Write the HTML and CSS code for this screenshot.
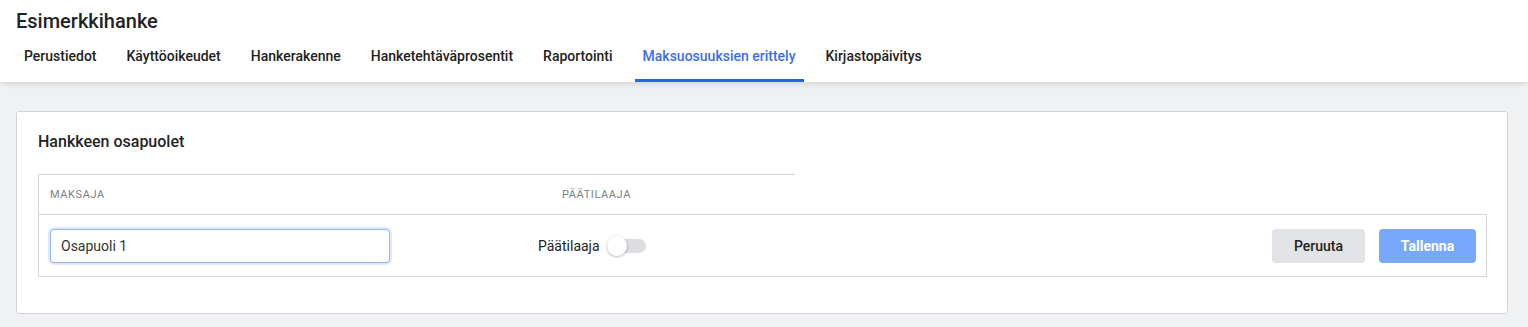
FILE: index.html
```html
<!DOCTYPE html>
<html lang="fi">
<head>
  <meta charset="UTF-8">
  <meta name="viewport" content="width=device-width, initial-scale=1.0">
  <title>Esimerkkihanke</title>
  <link rel="stylesheet" href="styles.css">
</head>
<body>

<!-- Project header with tabs -->
<header class="project-header">
  <h1 class="project-title">Esimerkkihanke</h1>
  <nav class="tabs">
    <a class="tab">Perustiedot</a>
    <a class="tab">Käyttöoikeudet</a>
    <a class="tab">Hankerakenne</a>
    <a class="tab">Hanketehtäväprosentit</a>
    <a class="tab">Raportointi</a>
    <a class="tab active">Maksuosuuksien erittely</a>
    <a class="tab">Kirjastopäivitys</a>
  </nav>
</header>

<main class="content">
  <section class="card">
    <h2 class="card-title">Hankkeen osapuolet</h2>

    <div class="parties">
      <div class="parties-head">
        <div class="col col-payer">Maksaja</div>
        <div class="col col-client">Päätilaaja</div>
      </div>

      <div class="parties-row">
        <input class="text-input" type="text" value="Osapuoli 1">
        <label class="switch-label">
          Päätilaaja
          <span class="switch"><span class="switch-knob"></span></span>
        </label>
        <div class="row-actions">
          <button class="btn btn-cancel">Peruuta</button>
          <button class="btn btn-save">Tallenna</button>
        </div>
      </div>
    </div>
  </section>
</main>

</body>
</html>
```

FILE: styles.css
```css
body {
  font-family: Roboto, "Liberation Sans", Arial, sans-serif;
  background-color: #f0f1f3;
  color: #222;
  margin: 0;
  padding: 0;
}

/* Header */
.project-header {
  background-color: #fff;
  padding: 7px 16px 0;
  box-shadow: 0 2px 6px rgba(0, 0, 0, 0.12);
  position: relative;
}

.project-title {
  margin: 0;
  font-size: 20px;
  line-height: 28px;
  font-weight: 500;
  color: #1f2328;
}

.tabs {
  display: flex;
  gap: 14px;
  margin-top: 11px;
}

.tab {
  font-size: 14px;
  line-height: 20px;
  font-weight: 500;
  color: #222;
  padding: 0 8px 13px;
  border-bottom: 3px solid transparent;
  cursor: pointer;
}

.tab.active {
  color: #3a6fe6;
  border-bottom-color: #2a64ea;
}

/* Page content */
.content {
  padding: 29px 20px 14px 16px;
}

.card {
  background-color: #fff;
  border: 1px solid #d3d4d9;
  border-radius: 3px;
  padding: 18px 20px 36px 21px;
}

.card-title {
  margin: 0 0 20px;
  font-size: 16px;
  line-height: 24px;
  font-weight: 500;
  color: #1f2328;
}

/* Parties table */
.parties-head {
  display: flex;
  align-items: center;
  width: 756px;
  height: 39px;
  border-top: 1px solid #d6d7dc;
  border-left: 1px solid #d6d7dc;
}

.col {
  font-size: 11px;
  letter-spacing: 0.6px;
  text-transform: uppercase;
  color: #7b8089;
}

.col-payer {
  width: 512px;
  padding-left: 11px;
}

.parties-row {
  display: flex;
  align-items: center;
  border: 1px solid #d6d7dc;
  padding: 14px 10px 13px 11px;
}

.text-input {
  width: 340px;
  height: 34px;
  box-sizing: border-box;
  padding: 0 10px;
  font-family: inherit;
  font-size: 14px;
  color: #333;
  border: 1px solid #8db7f3;
  border-radius: 4px;
  box-shadow: 0 0 0 2px rgba(122, 170, 245, 0.25);
  outline: none;
}

.switch-label {
  display: flex;
  align-items: center;
  margin-left: 148px;
  font-size: 14px;
  color: #222;
}

.switch {
  position: relative;
  width: 39px;
  height: 14px;
  margin-left: 7px;
  border-radius: 7px;
  background-color: #dcdde1;
}

.switch-knob {
  position: absolute;
  left: 0;
  top: -3px;
  width: 20px;
  height: 20px;
  border-radius: 50%;
  background-color: #fff;
  box-shadow: 0 1px 3px rgba(0, 0, 0, 0.3);
}

.row-actions {
  margin-left: auto;
  display: flex;
  gap: 14px;
}

.btn {
  height: 34px;
  border: none;
  border-radius: 4px;
  font-family: inherit;
  font-size: 14px;
  font-weight: 500;
  cursor: pointer;
}

.btn-cancel {
  width: 93px;
  background-color: #e2e3e6;
  color: #222;
}

.btn-save {
  width: 97px;
  background-color: #77a8fb;
  color: #fff;
  font-weight: 700;
}
```
